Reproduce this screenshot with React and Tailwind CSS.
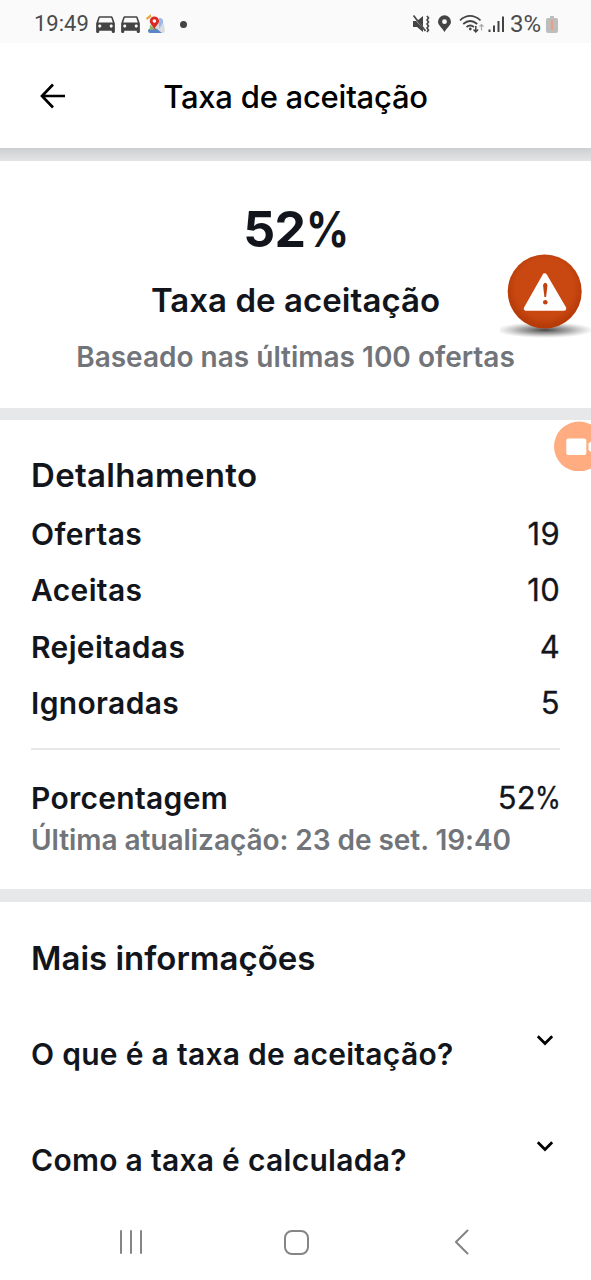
import { MdDirectionsCar } from "react-icons/md";

const details = [
  { label: "Ofertas", value: 19 },
  { label: "Aceitas", value: 10 },
  { label: "Rejeitadas", value: 4 },
  { label: "Ignoradas", value: 5 },
];

const questions = ["O que é a taxa de aceitação?", "Como a taxa é calculada?"];

function MapPinIcon() {
  return (
    <svg viewBox="0 0 20 20" className="ml-[3px] size-5">
      <path d="M7 6h9l2 5 1 6q0 2-2 2H4q-2 0-2-2l2-6z" fill="#d8dee0" />
      <path d="M2 16q4-4 9-1l5 4H4q-2 0-2-3z" fill="#5b85c4" />
      <path d="M4 11l6 4-6 1z" fill="#8db66a" />
      <path d="M13 4q5 0 4 5l-4 6z" fill="#9cb9ea" />
      <path d="M0 4l5-4v3L1 6z" fill="#eda63a" />
      <path d="M8.3 15.5C7.5 12 3.8 10.500 3.800 7a4.600 4.600 0 0 1 9.200 0c0 3.500-3.900 5-4.700 8.500z" fill="#db2a26" />
      <circle cx="8.400" cy="7" r="1.800" fill="#fff" />
    </svg>
  );
}

function StatusIcons() {
  return (
    <svg viewBox="0 0 98 24" className="h-6 w-[98px]" fill="none" stroke="#444" strokeWidth="1.7">
      {/* muted, vibrating */}
      <path d="M1 9h4l6-5v16l-6-5H1z" fill="#444" stroke="none" />
      <path d="M0 3l14 16" stroke="#fafafa" strokeWidth="1.500" />
      <path d="M1.500 3.500L13.500 19" />
      <path d="M15 4l1.500 2-1.500 2 1.500 2-1.500 2 1.500 2-1.500 2 1.500 2-1.500 2" strokeWidth="1.600" />
      {/* location */}
      <path
        d="M32.500 20C30 16 26 13 26 9.800a6.500 6.500 0 0 1 13 0C39 13 35 16 32.500 20zM32.500 7.300a2.400 2.400 0 1 0 0 4.800 2.400 2.400 0 0 0 0-4.800z"
        fill="#444"
        fillRule="evenodd"
        stroke="none"
      />
      {/* wifi with traffic arrows */}
      <path d="M48 8.300q10-8.800 20.500 0M51.200 12q7-6 14 0M54.500 15q3.700-3 7.500 0" />
      <circle cx="58.300" cy="17" r="1.400" fill="#444" stroke="none" />
      <path d="M63.800 14v6M61.500 17.500l2.300 2.500 2.300-2.500" strokeWidth="1.500" />
      <path d="M69.500 18.500v-6M67.500 14.500l2-2 2 2" stroke="#aaa" strokeWidth="1.200" />
      {/* signal */}
      <path d="M77.500 17.500v2.500M82 13.500v6.500M86.500 9v11M91 4.500v15.500" strokeWidth="2" />
    </svg>
  );
}

function StatusBar() {
  return (
    <div className="flex h-[43px] shrink-0 items-center bg-[#fafafa] pt-[5px] pr-[33px] pl-[34px] font-['Roboto',sans-serif] text-[22px] text-[#4b4b4b]">
      <span className="w-[54px] leading-6">19:49</span>
      <MdDirectionsCar className="-mt-[2px] ml-[5px] size-[25px] text-[#444]" />
      <MdDirectionsCar className="-mt-[2px] size-[25px] text-[#444]" />
      <MapPinIcon />
      <span className="ml-[14px] size-[7px] rounded-full bg-[#444]" />
      <div className="ml-auto flex items-center">
        <StatusIcons />
        <span className="w-[36px] text-[24px] leading-6">3%</span>
        <svg viewBox="0 0 12 17" className="h-[17px] w-3">
          <path d="M4 0h4v2h2q2 0 2 2v11q0 2-2 2H2q-2 0-2-2V4q0-2 2-2h2z" fill="#bdbdbd" />
          <path d="M6 4v10" stroke="#e7a185" strokeWidth="2.400" />
        </svg>
      </div>
    </div>
  );
}

function Header() {
  return (
    <header className="relative flex h-[105px] shrink-0 items-center justify-center bg-white pt-[3px]">
      <svg
        viewBox="0 0 26 26"
        className="absolute top-[40px] left-[40px] size-[26px]"
        fill="none"
        stroke="#000"
        strokeWidth="2.700"
      >
        <path d="M13 1.500L2 13l11 11.500M2 13h23" />
      </svg>
      <h1 className="text-[31px] leading-10 font-medium tracking-[-0.25px] text-black">
        Taxa de aceitação
      </h1>
    </header>
  );
}

function Chevron() {
  return (
    <svg viewBox="0 0 18 12" className="-mt-[28px] h-3 w-[18px]" fill="none" stroke="#000" strokeWidth="2.700">
      <path d="M1.800 2.300L9 9.500l7.200-7.200" />
    </svg>
  );
}

function WarningBubble() {
  return (
    <svg viewBox="0 0 91 96" className="absolute top-[250px] left-[500px] h-24 w-[91px]">
      <defs>
        <radialGradient id="orange" cx="50%" cy="45%" r="52%">
          <stop offset="0.75" stopColor="#c94812" />
          <stop offset="1" stopColor="#b63b08" />
        </radialGradient>
        <radialGradient id="floor">
          <stop offset="0" stopColor="#222" stopOpacity="0.85" />
          <stop offset="0.5" stopColor="#555" stopOpacity="0.5" />
          <stop offset="1" stopColor="#888" stopOpacity="0" />
        </radialGradient>
      </defs>
      <ellipse cx="45" cy="80" rx="50" ry="8" fill="url(#floor)" />
      <circle cx="44.700" cy="41.500" r="37" fill="url(#orange)" />
      <path d="M44.700 25.500L26 58.500h38z" fill="#fff" stroke="#fff" strokeWidth="4.500" strokeLinejoin="round" />
      <path d="M43 35q2.300-4.500 4.500 0l-1.400 12h-1.700z" fill="#c04210" />
      <circle cx="45.300" cy="52.300" r="2.300" fill="#c04210" />
    </svg>
  );
}

function RecordBubble() {
  return (
    <svg viewBox="0 0 37 50" className="absolute top-[421px] left-[554px] h-[50px] w-[37px]">
      <circle cx="25" cy="25.500" r="25" fill="#ffad80" />
      <rect x="12.300" y="17.500" width="20" height="16.500" rx="2" fill="#fff" />
      <path d="M37 20.500l-2.500 2v6.500l2.500 2z" fill="#fff" />
    </svg>
  );
}

export default function App() {
  return (
    <div className="relative flex h-[1280px] w-[591px] flex-col overflow-hidden bg-white font-['Inter',sans-serif] text-[#12161c]">
      <StatusBar />
      <Header />
      <div className="h-[13px] shrink-0 bg-linear-to-b from-[#cdced0] via-[#d9dadc] to-[#e3e4e6]" />

      <section className="flex h-[246px] shrink-0 flex-col items-center pt-[38px]">
        <p className="text-[50px] leading-[60px] font-bold tracking-[-0.5px]">
          52<span className="-mr-[8px] inline-block origin-left scale-x-[0.85]">%</span>
        </p>
        <h2 className="mt-[21px] text-[33px] leading-10 font-semibold tracking-[0.05px]">Taxa de aceitação</h2>
        <p className="mt-[19px] text-[28px] leading-9 font-semibold text-[#717479]">
          Baseado nas últimas 100 ofertas
        </p>
      </section>
      <div className="mt-px h-3 shrink-0 bg-[#e7e8ea]" />

      <section className="flex h-[469px] shrink-0 flex-col px-[31px] pt-[35px]">
        <h2 className="text-[33px] leading-10 font-semibold tracking-[0.3px]">Detalhamento</h2>
        <ul className="mt-[11px]">
          {details.map((item) => (
            <li key={item.label} className="flex h-[56.300px] items-center justify-between text-[30px] leading-9">
              <span className="font-semibold tracking-[0.35px]">{item.label}</span>
              <span className="text-[31px] tracking-[0.3px] [-webkit-text-stroke:0.3px_#12161c]">{item.value}</span>
            </li>
          ))}
        </ul>
        <div className="mt-[17px] h-[2px] bg-[#e7e8ea]" />
        <div className="mt-[30px] flex items-center justify-between text-[30px] leading-9">
          <span className="font-semibold tracking-[0.3px]">Porcentagem</span>
          <span className="text-[31px] [-webkit-text-stroke:0.3px_#12161c]">
            52<span className="-ml-px -mr-[5px] inline-block origin-left scale-x-[0.85]">%</span>
          </span>
        </div>
        <p className="mt-[6px] text-[28px] leading-9 font-semibold tracking-[-0.05px] text-[#717479]">
          Última atualização: 23 de set. 19:40
        </p>
      </section>
      <div className="h-[13px] shrink-0 bg-[#e7e8ea]" />

      <section className="flex h-[310px] shrink-0 flex-col px-[31px] pt-[36px]">
        <h2 className="text-[33px] leading-10 font-semibold">Mais informações</h2>
        <div className="mt-[23px]">
          {questions.map((question) => (
            <button key={question} className="flex h-[106px] w-full items-center justify-between pr-[6px] text-left">
              <span className="-mt-px text-[30px] leading-9 font-semibold tracking-[0.28px]">{question}</span>
              <Chevron />
            </button>
          ))}
        </div>
      </section>

      <nav className="flex h-[60px] items-center pl-[119px]">
        <svg viewBox="0 0 24 24" className="size-6" stroke="#858585" strokeWidth="2" strokeLinecap="round">
          <path d="M2 1v22M12 1v22M22 1v22" />
        </svg>
        <div className="ml-[141px] size-[25px] rounded-[8px] border-2 border-[#858585]" />
        <svg
          viewBox="0 0 14 26"
          className="ml-[146px] h-[26px] w-[14px]"
          fill="none"
          stroke="#858585"
          strokeWidth="2"
          strokeLinecap="round"
        >
          <path d="M12.500 1.500L1 13l11.500 11.500" />
        </svg>
      </nav>

      <WarningBubble />
      <RecordBubble />
    </div>
  );
}
